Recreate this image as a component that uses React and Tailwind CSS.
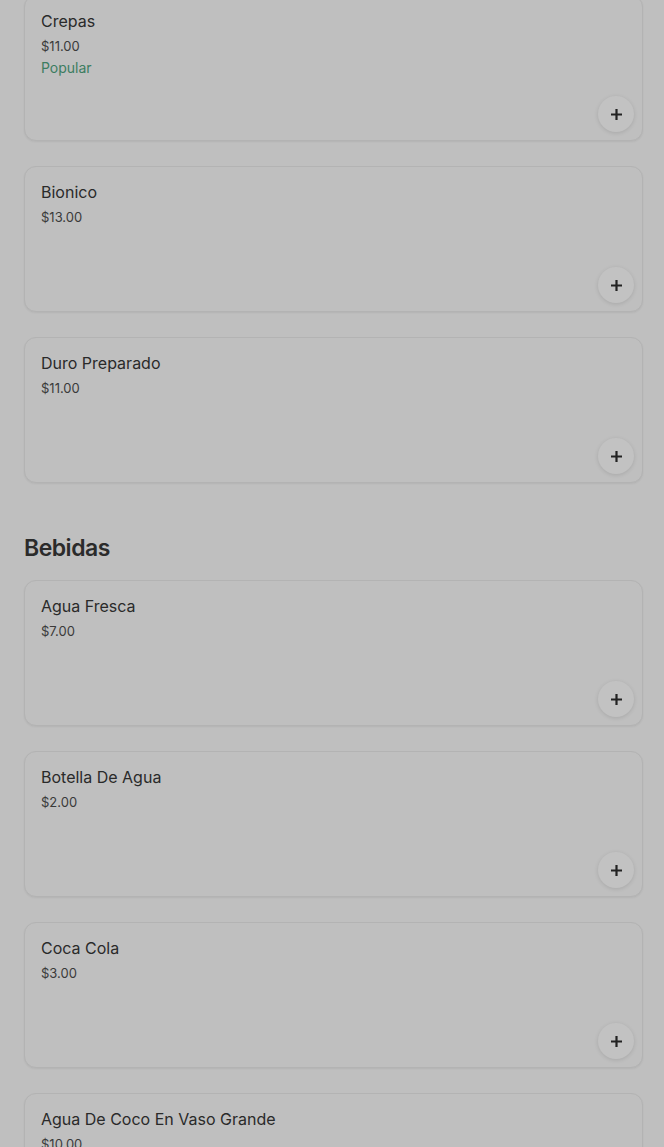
import React from "react";

const sections = [
  {
    title: null,
    items: [
      { name: "Crepas", price: "$11.00", popular: true },
      { name: "Bionico", price: "$13.00" },
      { name: "Duro Preparado", price: "$11.00" },
    ],
  },
  {
    title: "Bebidas",
    items: [
      { name: "Agua Fresca", price: "$7.00" },
      { name: "Botella De Agua", price: "$2.00" },
      { name: "Coca Cola", price: "$3.00" },
      { name: "Agua De Coco En Vaso Grande", price: "$10.00" },
    ],
  },
];

const PlusIcon = () => (
  <svg width="13" height="13" viewBox="0 0 13 13" fill="none">
    <path d="M6.5 1v11M1 6.5h11" stroke="#222" strokeWidth="2.2" />
  </svg>
);

const ItemCard = ({ item }) => (
  <div className="flex h-[146px] flex-col rounded-xl border border-[#b3b3b3] bg-[#bfbfbf] shadow-[0_1px_2px_rgba(0,0,0,0.06)]">
    <div className="flex flex-col px-4 pt-[13px]">
      <span className="text-[16px] leading-6 font-normal text-[#2a2a2a]">
        {item.name}
      </span>
      <span className="mt-[3px] text-[13px] leading-5 text-[#3a3a3a]">
        {item.price}
      </span>
      {item.popular && (
        <span className="mt-[2px] text-[14px] leading-5 text-[#3c7d61]">
          Popular
        </span>
      )}
    </div>
    <button className="mt-auto mr-[8px] mb-[8px] flex h-9 w-9 items-center justify-center self-end rounded-full bg-[#c2c2c2] shadow-[0_1px_4px_rgba(0,0,0,0.12)]">
      <PlusIcon />
    </button>
  </div>
);

const App = () => {
  return (
    <div
      className="min-h-screen overflow-hidden bg-[#bfbfbf]"
      style={{ fontFamily: "Inter, 'Noto Sans', sans-serif" }}
    >
      <div className="-mt-[5px] flex flex-col pl-6 pr-[21px]">
        {sections.map((section, si) => (
          <div key={si} className="flex flex-col">
            {section.title && (
              <h2 className="mt-[49px] mb-[16px] text-[23px] leading-8 font-semibold tracking-[-0.5px] text-[#2b2b2b]">
                {section.title}
              </h2>
            )}
            <div className="flex flex-col gap-[25px]">
              {section.items.map((item, i) => (
                <ItemCard key={i} item={item} />
              ))}
            </div>
          </div>
        ))}
      </div>
    </div>
  );
};

export default App;
